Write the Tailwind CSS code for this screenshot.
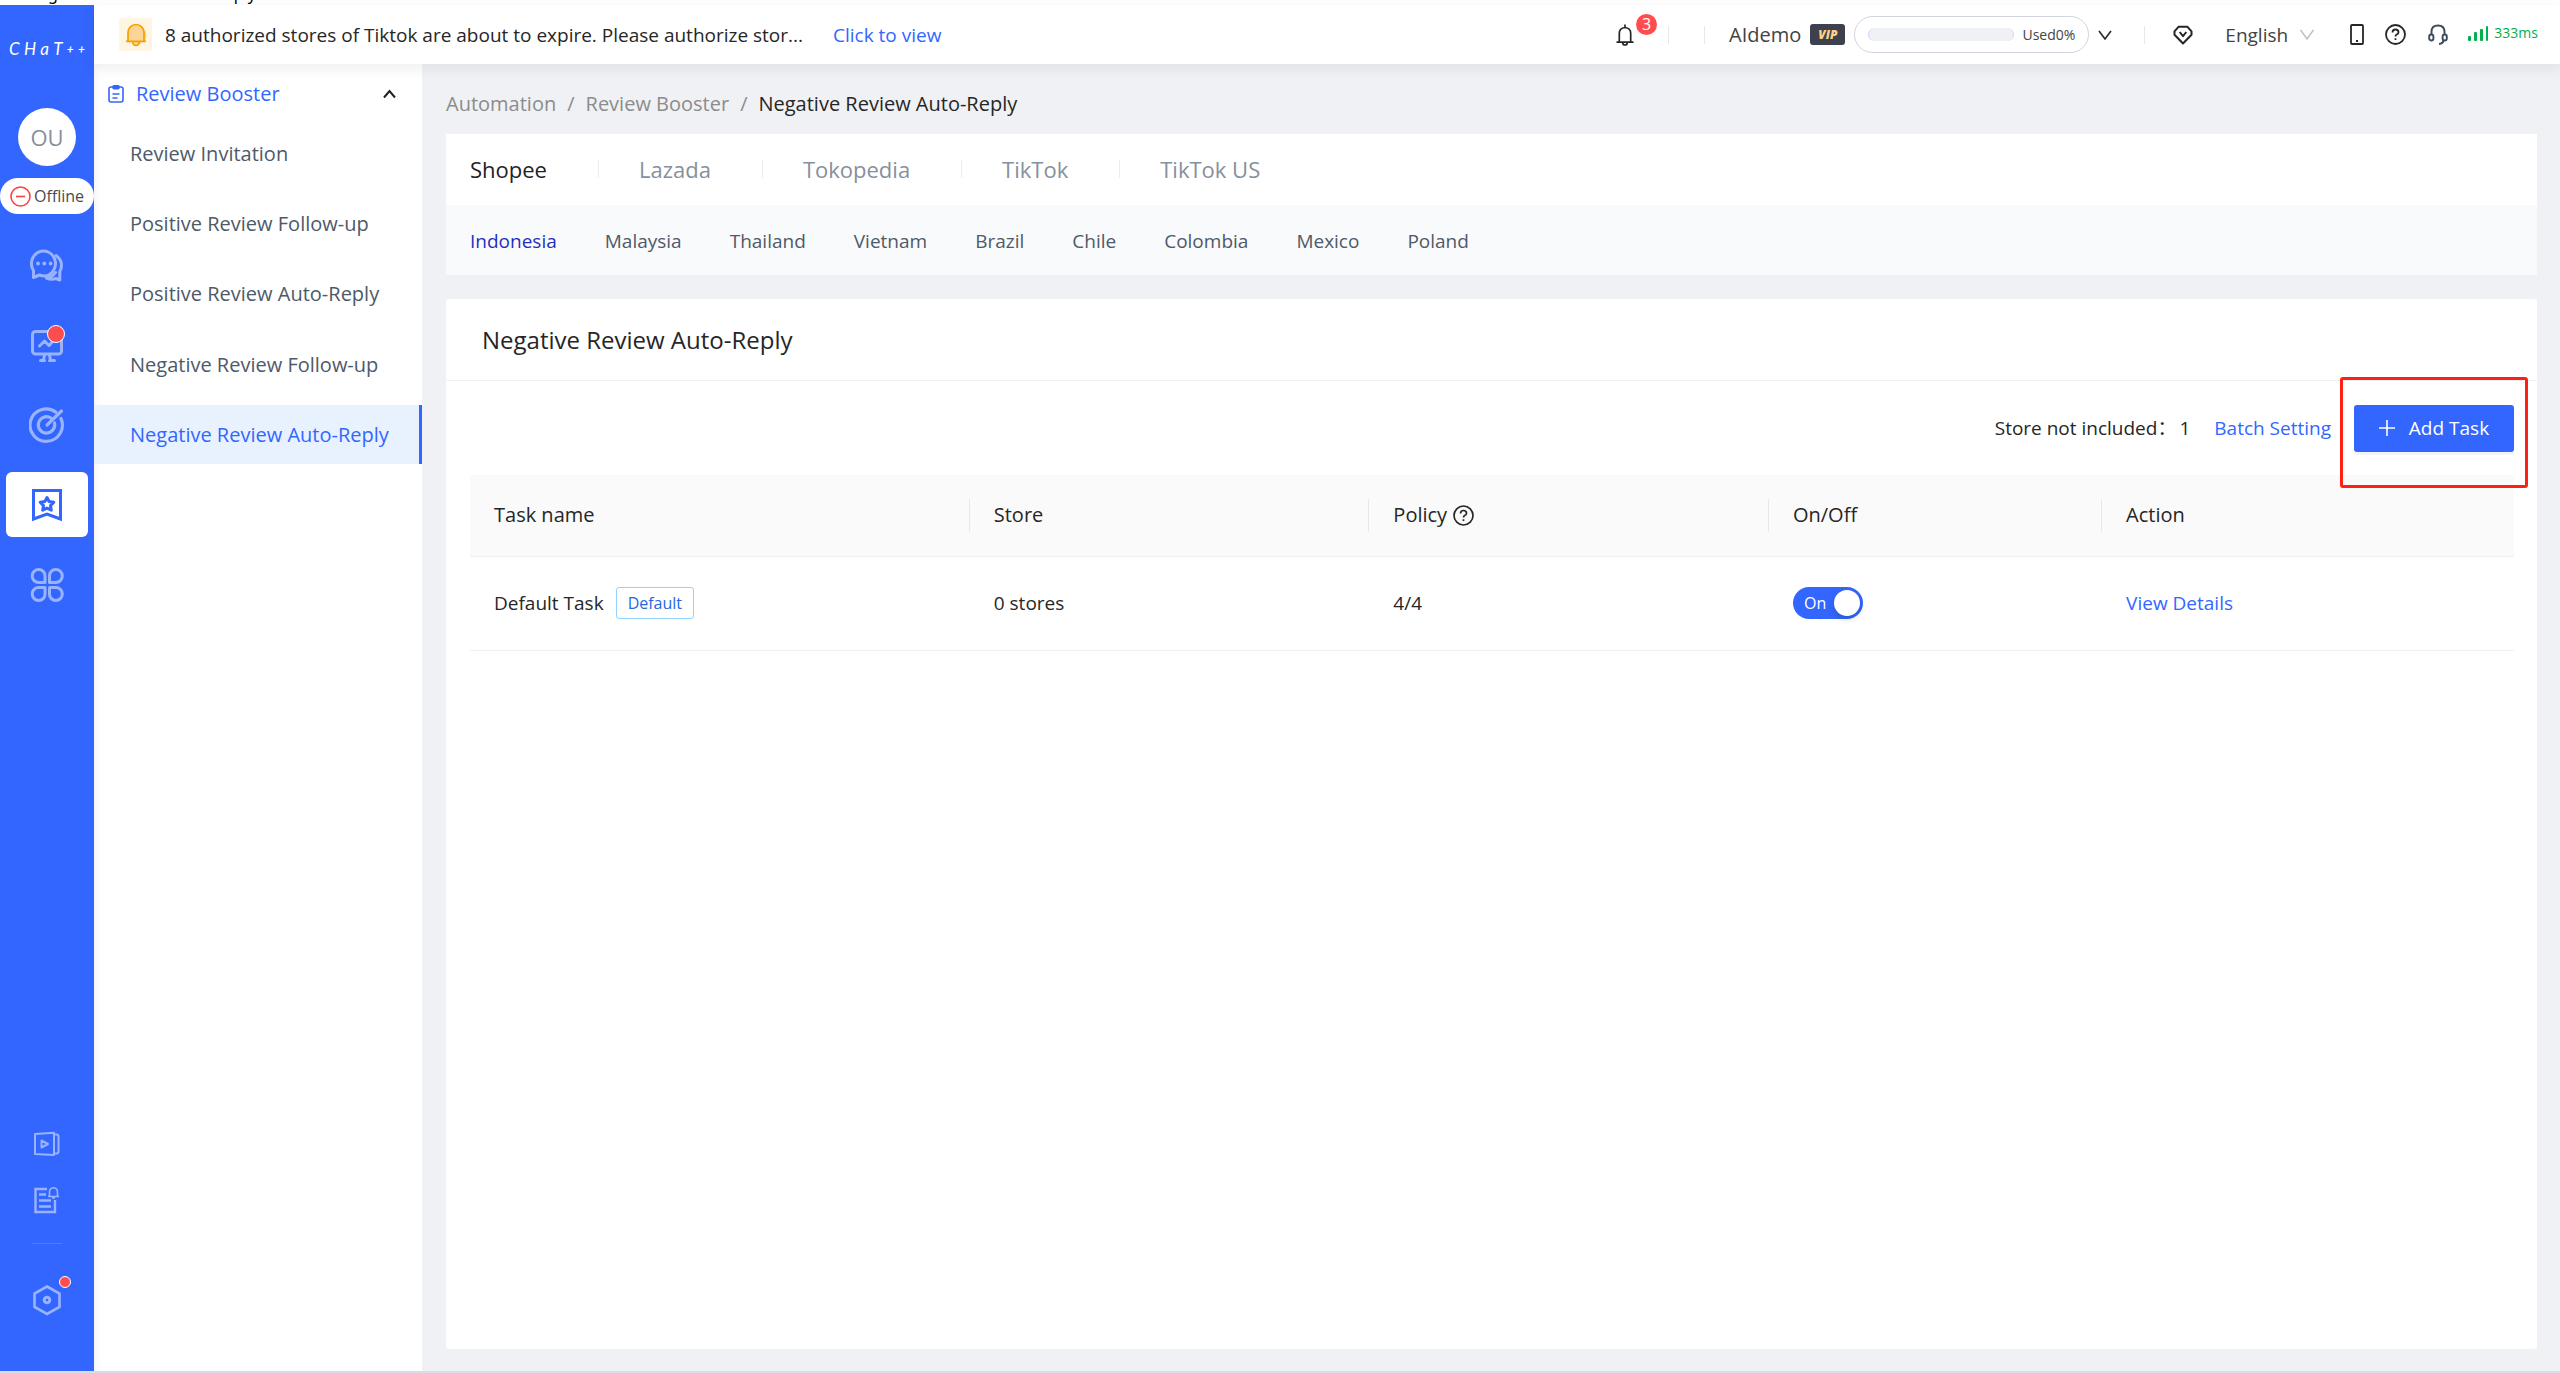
<!DOCTYPE html>
<html lang="en">
<head>
<meta charset="utf-8">
<title>Negative Review Auto-Reply</title>
<script src="https://cdn.jsdelivr.net/npm/@tailwindcss/browser@4"></script>
</head>
<body class="flex min-h-screen flex-col bg-white font-['Open_Sans','Noto_Sans','Noto_Sans_CJK_SC',sans-serif] text-[20px] leading-7 text-[#262626]">
<div class="flex h-[5px] shrink-0 items-end gap-44 overflow-hidden pl-12 font-['Noto_Sans',sans-serif] text-[16px] leading-[21px] text-black" aria-hidden="true"><span>g</span><span>ply</span></div>
<div class="flex grow">

  <!-- Primary rail -->
  <aside class="flex w-[94px] shrink-0 flex-col items-center bg-[#3366ff] text-white">
    <a href="#" aria-label="CHAT++" class="mt-8 flex h-6 w-[76px] items-center justify-between font-['Lato',sans-serif] text-[17px] leading-6 italic"><span>C</span><span>H</span><span>a</span><span>T</span><span class="text-[12px] font-bold">+</span><span class="text-[12px] font-bold">+</span></a>
    <button class="mt-[47px] flex size-[58px] items-center justify-center rounded-full bg-white text-[22px] text-[#86909c]">OU</button>
    <button class="mt-3 flex h-9 w-full items-center justify-center gap-[3px] rounded-full bg-white text-[16px] text-[#4a4a4a]">
      <svg class="size-[21px]" viewBox="0 0 21 21" fill="none" stroke="#ff4040" stroke-width="1.6"><circle cx="10.5" cy="10.5" r="9.5"/><path d="M6 10.5h9"/></svg>
      <span>Offline</span>
    </button>
    <nav class="mt-[18px] flex w-full flex-col items-center gap-[15px]" aria-label="Main">
      <button aria-label="Chat" class="flex h-[65px] w-[82px] items-center justify-center">
        <svg class="size-9" viewBox="0 0 36 36" fill="none" stroke="#9ab3ff" stroke-width="3" stroke-linejoin="round" stroke-linecap="round"><path d="M4.500 30.500v-7A12 12.500 0 1 1 15.500 29q-2.500 0-5-1z"/><path d="M27 8.500a12.500 12.500 0 0 1 5.500 9.500q0 4-1.700 6.500v8.500l-4-1.500q-4.500 1.500-9.300-.5 6-1 9-5.500"/><g fill="#9ab3ff" stroke="none"><circle cx="9" cy="16.500" r="1.900"/><circle cx="15.300" cy="16.500" r="1.900"/><circle cx="21.600" cy="16.500" r="1.900"/></g></svg>
      </button>
      <button aria-label="Monitor" class="relative flex h-[65px] w-[82px] items-center justify-center">
        <svg class="size-9" viewBox="0 0 36 36" fill="none" stroke="#9ab3ff" stroke-width="3" stroke-linejoin="round" stroke-linecap="round"><rect x="3.500" y="4.500" width="29" height="22.500" rx="3"/><path d="M10.500 19l5-5 4.500 4.500 5-5.500M15.500 28l-1 5M20.500 28l1 5M11.500 33.500h4M20.500 33.500h5"/></svg>
        <span class="absolute top-[13px] right-[23px] size-[18px] rounded-full border border-white bg-[#ff4d4f]"></span>
      </button>
      <button aria-label="Targets" class="flex h-[65px] w-[82px] items-center justify-center">
        <svg class="size-9" viewBox="0 0 36 36" fill="none" stroke="#9ab3ff" stroke-width="3.200" stroke-linecap="round"><path d="M27 5.200a16.200 16.200 0 1 0 5 6.300"/><path d="M22 11a8.200 8.200 0 1 0 3.500 5"/><path d="M18 18L32.500 4"/></svg>
      </button>
      <button aria-label="Reviews" class="flex h-[65px] w-[82px] items-center justify-center rounded-md bg-white">
        <svg class="size-9" viewBox="0 0 36 36" fill="none" stroke="#3366ff" stroke-width="3"><path d="M4.500 3.500h27v28.500l-13.500-5-13.500 5z"/><path stroke-linejoin="round" d="M18 10.500l2.100 4 4.700.8-3.300 3.300.8 4.600-4.300-2-4.300 2 .8-4.600-3.300-3.300 4.700-.8z"/></svg>
      </button>
      <button aria-label="Apps" class="flex h-[65px] w-[82px] items-center justify-center">
        <svg class="size-9" viewBox="0 0 36 36" fill="none" stroke="#9ab3ff" stroke-width="3" stroke-linejoin="round"><path d="M16 15.500H9.700A6.500 6.500 0 0 1 9.700 2.500 6.300 6.300 0 0 1 16 9zM20.500 15.500h6.300a6.500 6.500 0 0 0 0-13A6.300 6.300 0 0 0 20.500 9zM16 20.500H9.700a6.500 6.500 0 0 0 0 13A6.300 6.300 0 0 0 16 27zM20.500 20.500h6.300a6.500 6.500 0 0 1 0 13A6.300 6.300 0 0 1 20.500 27z"/></svg>
      </button>
    </nav>
    <div class="mt-auto flex w-full flex-col items-center pb-[55px]">
      <button aria-label="Tutorials" class="flex size-7 items-center justify-center">
        <svg class="size-7" viewBox="0 0 28 28" fill="none" stroke="#9ab3ff" stroke-width="2" stroke-linejoin="round"><path d="M2 4l19-1.200v22.200L2 24zM21 4.500h2.500q2 0 2 2v15q0 2-2 2H21M8.500 10.500v7l6.500-3.500z"/></svg>
      </button>
      <button aria-label="Release notes" class="mt-7 flex size-7 items-center justify-center">
        <svg class="size-7" viewBox="0 0 28 28" fill="none" stroke="#9ab3ff" stroke-width="2.400"><path d="M14 3H2.500v23H22V14M6 8.500h7M6 14.500h12M6 20.500h12"/><path stroke-width="1.600" d="M15 10.500h11M16.500 10.500V6q0-3.800 4-4.300 4 .5 4 4.300v4.500M19 12h3"/></svg>
      </button>
      <hr class="mt-[29px] h-px w-[30px] border-0 bg-white/15">
      <button aria-label="Settings" class="relative mt-10 flex size-8 items-center justify-center">
        <svg class="size-8" viewBox="0 0 32 32" fill="none" stroke="#9ab3ff" stroke-width="2.600"><path d="M16 2.500l12.500 7v13.500L16 30 3.500 23V9.500z"/><circle cx="16" cy="16" r="2.800" stroke-width="3"/></svg>
        <span class="absolute -top-2 -right-2 size-3 rounded-full border border-white bg-[#ff4d4f]"></span>
      </button>
    </div>
  </aside>

  <div class="flex min-w-0 grow flex-col">
    <!-- Top bar -->
    <header class="relative z-10 flex h-[59px] shrink-0 items-center bg-white pr-[22px] pl-[25px] shadow-[0_4px_14px_rgba(0,21,41,0.08)]">
      <span class="flex size-[33px] items-center justify-center rounded-xs bg-[#fff5e3]">
        <svg class="size-6" viewBox="0 0 24 24" fill="none" stroke="#f7a000" stroke-width="1.700"><path d="M13 3.500q8 0 9.500 8 0 7-7 9.500l-8-2.500z" fill="#fbd595" stroke="none"/><path fill="#fbd595" d="M4 18V9.500a8 8 0 0 1 16 0V18M2 18.300h20M8.500 18.500q.5 4 3.500 4t3.500-4"/></svg>
      </span>
      <p class="ml-[13px] w-[650px] text-[19px]">8 authorized stores of Tiktok are about to expire. Please authorize stor...</p>
      <a href="#" class="ml-[18px] text-[19px] whitespace-nowrap text-[#3366ff]">Click to view</a>

      <div class="ml-auto flex shrink-0 items-center">
        <button aria-label="Notifications, 3 new" class="relative flex h-9 w-[18px] items-center">
          <svg class="h-[22px] w-[18px]" viewBox="0 0 18 22" fill="none" stroke="#262626" stroke-width="1.700"><path d="M3.300 18V9.500q0-5.500 5.700-6 5.700.5 5.700 6V18M.5 18.200h17M9 .5v3M6.700 19q.3 2 2.300 2t2.300-2"/></svg>
          <span class="absolute -top-[3px] -right-[23px] flex size-[21px] items-center justify-center rounded-full bg-[#ff4d4f] text-[16px] leading-5 text-white">3</span>
        </button>
        <span class="ml-[34px] h-[18px] w-px bg-[#e8e8e8]"></span>
        <span class="ml-[35px] h-[18px] w-px bg-[#e8e8e8]"></span>
        <span class="ml-6 text-[#434343]">AIdemo</span>
        <span class="ml-[9px] flex h-[21px] w-[35px] items-center justify-center rounded-[3px] bg-[#3d414d] text-[12px] leading-4 font-extrabold text-[#ffd08a] italic">VIP</span>
        <span class="ml-[9px] flex h-[37px] w-[235px] items-center rounded-full border border-[#d0d5e0] px-[13px] text-[14px] text-[#434343]">
          <span role="progressbar" aria-label="Quota used" aria-valuenow="0" class="h-[13px] grow rounded-full border-x border-r-[#e8c8f5] border-l-[#c8d3ff] bg-[#f0f1f5]"></span>
          <span class="ml-2">Used0%</span>
        </span>
        <button aria-label="Quota details" class="ml-[9px]"><svg class="h-5 w-[14px]" viewBox="0 0 14 20" fill="none" stroke="#262626" stroke-width="1.600"><path d="M1 6l6 8 6-8"/></svg></button>
        <span class="ml-[32px] h-[18px] w-px bg-[#e8e8e8]"></span>
        <button aria-label="Membership" class="ml-7"><svg class="size-5" viewBox="0 0 20 20" fill="none" stroke="#262626" stroke-width="2" stroke-linejoin="round"><path d="M5.500 1.800h9l4 4.500v3.500L10 18.500 1.500 9.800V6.300z"/><path d="M6.700 7l3.300 4.200L13.300 7"/></svg></button>
        <label class="relative ml-8 flex items-center">
          <span class="sr-only">Language</span>
          <select class="h-9 w-[89px] appearance-none bg-transparent text-[19px] text-[#434343]"><option>English</option></select>
          <svg class="pointer-events-none absolute right-0 h-5 w-[14px]" viewBox="0 0 14 20" fill="none" stroke="#bfbfbf" stroke-width="1.500"><path d="M0.500 5l6.500 9 6.500-9"/></svg>
        </label>
        <button aria-label="Mobile app" class="ml-9"><svg class="h-[21px] w-[14px]" viewBox="0 0 14 21" fill="none" stroke="#262626" stroke-width="1.800"><rect x="1" y="1" width="12" height="19" rx="1"/><path d="M6 17h2"/></svg></button>
        <button aria-label="Help" class="ml-[21px]"><svg class="size-[21px]" viewBox="0 0 21 21" fill="none" stroke="#262626" stroke-width="1.800"><circle cx="10.500" cy="10.500" r="9.500"/><path d="M7.500 8.500q0-3 3-3t3 2.700q0 1.600-1.800 2.300-1.200.5-1.200 2M10.500 14.300v1.700"/></svg></button>
        <button aria-label="Support" class="ml-[22px]"><svg class="h-[21px] w-5" viewBox="0 0 20 21" fill="none" stroke="#3d4a5c" stroke-width="1.900"><path d="M3.500 11V8q0-6.500 6.500-6.500T16.500 8v3"/><rect x="1.200" y="10.500" width="4.200" height="6" rx="2.100"/><rect x="14.600" y="10.500" width="4.200" height="6" rx="2.100"/><path d="M15.500 16.500q-.5 3-4.500 3.500"/></svg></button>
        <span class="ml-5 flex items-center gap-[6px] pb-[3px] text-[14px] text-[#00b050]">
          <svg class="h-4 w-5" viewBox="0 0 20 16" fill="#00b050"><rect x="0" y="11" width="3" height="5" rx="1"/><rect x="6" y="7" width="3" height="9" rx="1"/><rect x="12" y="4" width="3" height="12" rx="1"/><rect x="18" y="1" width="2" height="15" rx="1"/></svg>
          <span>333ms</span>
        </span>
      </div>
    </header>

    <div class="flex min-h-0 grow">
      <!-- Section menu -->
      <nav class="w-[328px] shrink-0 bg-white shadow-[inset_8px_0_8px_-6px_rgba(0,0,0,0.05)]" aria-label="Review Booster">
        <button class="flex h-[61px] w-full items-center pr-[26px] pb-[2px] pl-[14px] text-[#3366ff]">
          <svg class="h-[18px] w-4" viewBox="0 0 16 18" fill="none" stroke="#3366ff" stroke-width="1.600"><rect x="1" y="2" width="14" height="15" rx="2"/><path d="M4.500 9h7M4.500 13h5" stroke-width="1.400"/><rect x="5" y=".8" width="6" height="3" rx="1" fill="#3366ff"/></svg>
          <span class="ml-3">Review Booster</span>
          <svg class="ml-auto h-3 w-[13px]" viewBox="0 0 13 12" fill="none" stroke="#1d2129" stroke-width="2"><path d="M1 9.500L6.500 3 12 9.500"/></svg>
        </button>
        <ul class="flex flex-col gap-[11px] text-[#4e5969]">
          <li><a href="#" class="flex h-[59px] items-center pb-[2px] pl-9">Review Invitation</a></li>
          <li><a href="#" class="flex h-[59px] items-center pb-[2px] pl-9">Positive Review Follow-up</a></li>
          <li><a href="#" class="flex h-[59px] items-center pb-[2px] pl-9">Positive Review Auto-Reply</a></li>
          <li><a href="#" class="flex h-[59px] items-center pl-9">Negative Review Follow-up</a></li>
          <li><a href="#" aria-current="page" class="flex h-[59px] items-center border-r-3 border-[#3366ff] bg-[#e8f2ff] pl-9 text-[#3366ff]">Negative Review Auto-Reply</a></li>
        </ul>
      </nav>

      <!-- Page -->
      <main class="flex min-w-0 grow flex-col bg-[#f0f1f5] pr-[23px] pb-[22px] pl-6">
        <ol class="flex h-[70px] items-center gap-[11px] pt-[10px] text-[#8c8c8c]">
          <li><a href="#">Automation</a></li><li>/</li>
          <li><a href="#">Review Booster</a></li><li>/</li>
          <li class="text-[#262626]">Negative Review Auto-Reply</li>
        </ol>

        <section class="bg-white">
          <div class="flex h-[71px] items-center pb-[2px] pl-6 text-[22px] text-[#86909c]">
            <button class="text-[#1d2129]">Shopee</button>
            <span class="mr-10 ml-[51px] h-[18px] w-px bg-[#ebedf0]"></span>
            <button>Lazada</button>
            <span class="mr-10 ml-[51px] h-[18px] w-px bg-[#ebedf0]"></span>
            <button>Tokopedia</button>
            <span class="mr-10 ml-[51px] h-[18px] w-px bg-[#ebedf0]"></span>
            <button>TikTok</button>
            <span class="mr-10 ml-[51px] h-[18px] w-px bg-[#ebedf0]"></span>
            <button>TikTok US</button>
          </div>
          <div class="flex h-[70px] items-center gap-12 bg-[#f9fafc] pt-[2px] pl-6 text-[19px] text-[#4e5969]">
            <button class="text-[#1f2fbf]">Indonesia</button><button>Malaysia</button><button>Thailand</button><button>Vietnam</button><button>Brazil</button><button>Chile</button><button>Colombia</button><button>Mexico</button><button>Poland</button>
          </div>
        </section>

        <section class="mt-6 flex grow flex-col rounded-[3px] bg-white">
          <h1 class="flex h-[82px] items-center border-b border-[#f0f0f5] pl-9 text-[24px] font-medium">Negative Review Auto-Reply</h1>
          <div class="px-[23px] pl-6">
            <div class="flex h-[94px] items-center justify-end text-[19px]">
              <span>Store not included：</span><span class="ml-[3px]">1</span>
              <a href="#" class="ml-6 text-[#3366ff]">Batch Setting</a>
              <div class="relative ml-[23px]">
                <button class="flex h-[47px] w-40 items-center justify-center gap-[14px] rounded-[3px] bg-[#3366ff] text-white shadow-[0_3px_0_rgba(0,0,0,0.045)]">
                  <svg class="size-4" viewBox="0 0 16 16" stroke="#fff" stroke-width="1.600"><path d="M8 0v16M0 8h16"/></svg>Add Task
                </button>
                <span class="pointer-events-none absolute -inset-x-[14px] -top-7 -bottom-9 rounded-[3px] border-3 border-[#ff2015]"></span>
              </div>
            </div>
            <table class="w-full table-fixed text-left">
              <colgroup><col class="w-[24.45%]"><col class="w-[19.55%]"><col class="w-[19.55%]"><col class="w-[16.3%]"><col></colgroup>
              <thead class="bg-[#fafafa]">
                <tr class="h-[81px] border-b border-[#f0f0f0]">
                  <th class="p-0 pl-6 font-medium"><div class="flex items-center justify-between">Task name<span class="h-[33px] w-px bg-[#e8e8e8]"></span></div></th>
                  <th class="p-0 pl-6 font-medium"><div class="flex items-center justify-between">Store<span class="h-[33px] w-px bg-[#e8e8e8]"></span></div></th>
                  <th class="p-0 pl-6 font-medium"><div class="flex items-center justify-between"><span class="flex items-center gap-[6px]">Policy
                    <svg class="size-[21px]" viewBox="0 0 21 21" fill="none" stroke="#262626" stroke-width="1.700"><circle cx="10.500" cy="10.500" r="9.500"/><path d="M7.500 8.500q0-3 3-3t3 2.700q0 1.600-1.800 2.300-1.200.5-1.200 2M10.500 14.300v1.700"/></svg></span><span class="h-[33px] w-px bg-[#e8e8e8]"></span></div></th>
                  <th class="p-0 pl-6 font-medium"><div class="flex items-center justify-between">On/Off<span class="h-[33px] w-px bg-[#e8e8e8]"></span></div></th>
                  <th class="p-0 pl-6 font-medium">Action</th>
                </tr>
              </thead>
              <tbody class="text-[19px]">
                <tr class="h-[94px] border-b border-[#f0f0f0]">
                  <td class="p-0 pl-6"><div class="flex items-center gap-3">Default Task<span class="flex h-8 items-center rounded-[3px] border border-[#91d5ff] px-[11px] text-[16px] text-[#2468e0]">Default</span></div></td>
                  <td class="p-0 pl-6">0 stores</td>
                  <td class="p-0 pl-6">4/4</td>
                  <td class="p-0 pl-6">
                    <label class="flex h-8 w-[70px] cursor-pointer items-center justify-between rounded-full bg-[#3366ff] pr-[3px] pl-[11px] text-[16px] text-white">
                      <input type="checkbox" checked class="sr-only">On<span class="size-[26px] rounded-full bg-white shadow-[0_3px_6px_rgba(0,35,11,0.2)]"></span>
                    </label>
                  </td>
                  <td class="p-0 pl-6"><a href="#" class="text-[#3366ff]">View Details</a></td>
                </tr>
              </tbody>
            </table>
          </div>
        </section>
      </main>
    </div>
  </div>
</div>
<div class="h-[2px] shrink-0 bg-[#dcd8ee]"></div>
</body>
</html>
